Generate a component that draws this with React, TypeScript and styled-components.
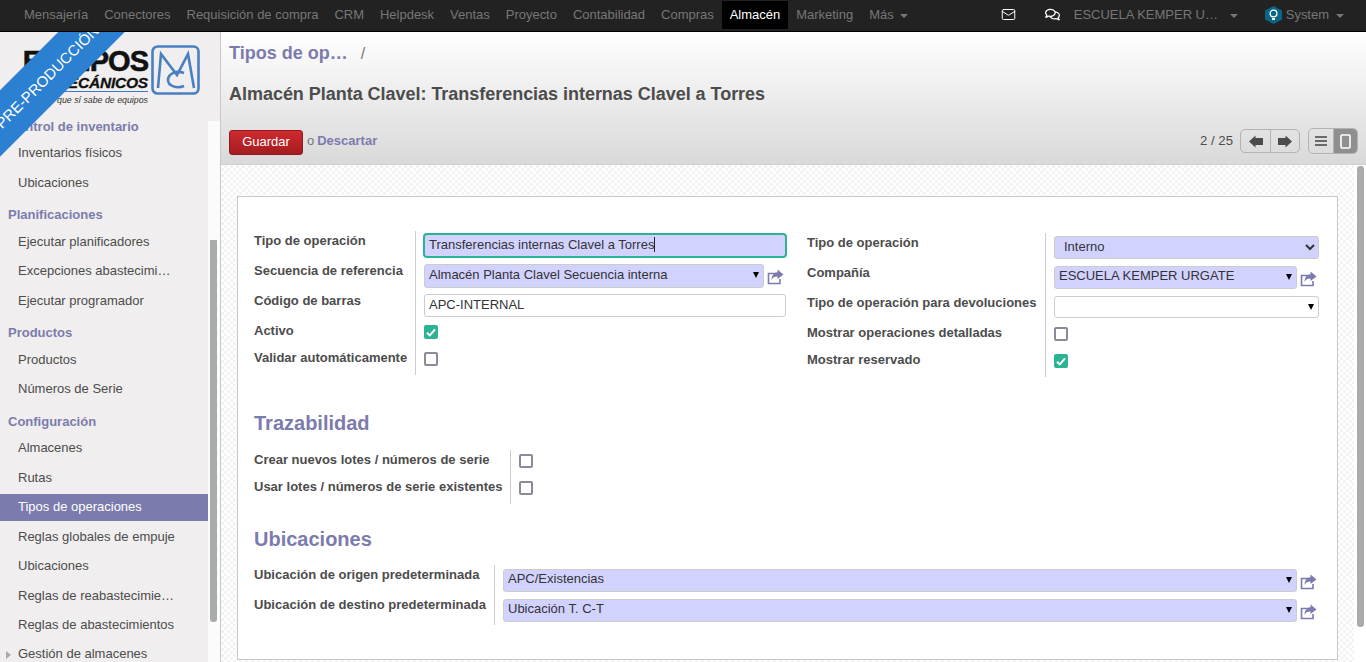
import React from 'react';
import styled, { createGlobalStyle } from 'styled-components';
import { FaRegComments } from 'react-icons/fa';
import { Mail } from 'lucide-react';

const PURPLE = '#7c7bad';
const REQUIRED = '#d2d2ff';
const TEAL = '#2bb394';

const GlobalStyle = createGlobalStyle`
  html, body, #root {
    margin: 0;
    height: 100%;
  }
  body {
    font-family: "Liberation Sans", Arial, sans-serif;
    font-size: 13px;
    color: #4c4c4c;
    overflow: hidden;
  }
  * {
    box-sizing: border-box;
  }
`;

const Shell = styled.div`
  height: 662px;
  display: flex;
  flex-direction: column;
  overflow: hidden;
`;

/* top bar */
const NavBar = styled.nav`
  flex: none;
  height: 32px;
  display: flex;
  align-items: stretch;
  background: #222;
  border-bottom: 1px solid #000;
  padding-left: 16px;
  letter-spacing: -0.015px;
  position: relative;
  z-index: 2;
`;

const NavItem = styled.a<{ $active?: boolean }>`
  display: flex;
  align-items: center;
  gap: 6px;
  padding: 0 8px 2px;
  height: 28px;
  margin-top: 1px;
  color: ${(p) => (p.$active ? '#fff' : '#777')};
  background: ${(p) => (p.$active ? '#000' : 'none')};
`;

const Caret = styled.span`
  width: 0;
  height: 0;
  margin-top: 3px;
  border-left: 4px solid transparent;
  border-right: 4px solid transparent;
  border-top: 4px solid #777;
`;

const NavRight = styled.div`
  margin-left: auto;
  display: flex;
  align-items: center;
  color: #777;
  height: 28px;
  padding-bottom: 2px;
  margin-top: 1px;
`;

const NavIcon = styled.span<{ $w: number }>`
  width: ${(p) => p.$w}px;
  display: flex;
  color: #fff;
  font-size: 15px;
`;

const Company = styled.span`
  width: 146px;
  white-space: nowrap;
  overflow: hidden;
  text-overflow: ellipsis;
  margin-right: 10px;
`;

const UserMenu = styled.span`
  display: flex;
  align-items: center;
  margin-left: 27px;
  margin-right: 22px;
`;

const Hex = styled.svg`
  width: 17px;
  height: 18px;
  margin: 2px 4px 0 0;
`;

const UserName = styled.span`
  margin-right: 7px;
`;

/* layout */
const Body = styled.div`
  flex: 1;
  min-height: 0;
  display: flex;
`;

const Sidebar = styled.aside`
  position: relative;
  flex: none;
  width: 221px;
  display: flex;
  flex-direction: column;
  background: #f0eeee;
  border-right: 1px solid #c8c8c8;
  overflow: hidden;
`;

const Ribbon = styled.div`
  position: absolute;
  left: -78px;
  top: 21px;
  width: 250px;
  height: 47px;
  line-height: 47px;
  transform: rotate(-45deg);
  background: #2c80d2;
  color: #fff;
  font-size: 15px;
  text-align: center;
`;

const LogoBlock = styled.div`
  flex: none;
  height: 89px;
  display: flex;
  padding: 13px 0 0 21px;
`;

const LogoText = styled.div`
  width: 127px;
  text-align: right;
  color: #111;
`;

const LogoMain = styled.div`
  font-size: 29px;
  line-height: 28px;
  font-weight: 700;
  letter-spacing: -1px;
  -webkit-text-stroke: 0.6px #111;
  margin-top: 2px;
  white-space: nowrap;
`;

const LogoSub = styled.div`
  font-size: 15.5px;
  line-height: 16px;
  font-weight: 700;
  font-style: italic;
  letter-spacing: -0.2px;
  border-bottom: 1px solid #3f78be;
  -webkit-text-stroke: 0.3px #111;
`;

const LogoSlogan = styled.div`
  font-size: 8.8px;
  line-height: 13px;
  font-style: italic;
  color: #333;
  margin-top: 2px;
  white-space: nowrap;
`;

const LogoMark = styled.svg`
  width: 49px;
  height: 50px;
  margin-left: 3px;
  flex: none;
`;

const MenuScroll = styled.div`
  flex: 1;
  min-height: 0;
  display: flex;
`;

const MenuList = styled.div`
  width: 208px;
  flex: none;
`;

const ScrollTrack = styled.div`
  flex: 1;
  background: #fbfbfb;
`;

const SideThumb = styled.div`
  width: 7px;
  height: 382px;
  margin: 119px 0 0 2px;
  background: #a8acab;
  border-radius: 0 0 3px 3px;
`;

const MenuHeading = styled.div<{ $first?: boolean }>`
  height: ${(p) => (p.$first ? '10px' : '24px')};
  line-height: ${(p) => (p.$first ? '12px' : '26px')};
  margin: ${(p) => (p.$first ? '0 0 9px' : '5.5px 0 2.5px')};
  padding-left: 8px;
  font-weight: 700;
  color: ${PURPLE};
`;

const MenuItem = styled.div<{ $active?: boolean }>`
  height: 27px;
  line-height: 25px;
  margin-bottom: 2.5px;
  padding: 0 33px 0 18px;
  white-space: nowrap;
  overflow: hidden;
  text-overflow: ellipsis;
  color: ${(p) => (p.$active ? '#fff' : '#4c4c4c')};
  background: ${(p) => (p.$active ? PURPLE : 'none')};
`;

const MenuFolder = styled.div`
  display: flex;
  align-items: center;
  height: 23px;
  padding-left: 6px;
  gap: 7px;
  white-space: nowrap;
  color: #4c4c4c;
`;

const FolderArrow = styled.span`
  width: 0;
  height: 0;
  margin-top: 3px;
  border-top: 4px solid transparent;
  border-bottom: 4px solid transparent;
  border-left: 5px solid #aaa;
`;

/* control panel */
const Main = styled.main`
  flex: 1;
  min-width: 0;
  display: flex;
  flex-direction: column;
`;

const ControlPanel = styled.header`
  flex: none;
  height: 133px;
  padding: 9px 8px 0;
  background: linear-gradient(#fff, #d9d9d9);
  border-bottom: 1px solid #cfcfcf;
`;

const Breadcrumb = styled.div`
  height: 24px;
  line-height: 25px;
  display: flex;
  font-size: 18px;
  font-weight: 700;
  color: ${PURPLE};
`;

const CrumbSep = styled.span`
  margin-left: 13px;
  font-weight: 400;
  font-size: 16px;
  color: #777;
`;

const Title = styled.h1`
  margin: 16px 0 0;
  height: 24px;
  line-height: 26px;
  font-size: 18px;
  font-weight: 700;
  letter-spacing: -0.03px;
  color: #4c4c4c;
`;

const Toolbar = styled.div`
  display: flex;
  align-items: flex-start;
  margin-top: 24px;
`;

const SaveButton = styled.button`
  width: 74px;
  height: 25px;
  margin-top: 1px;
  padding: 0 0 2px;
  font: 13px "Liberation Sans", Arial, sans-serif;
  color: #fff;
  background: linear-gradient(#cf2a30, #a31c20);
  border: 1px solid #8f1a1d;
  border-radius: 3px;
`;

const Or = styled.span`
  margin: 3px 3px 0 4px;
  line-height: 18px;
  color: #777;
`;

const Discard = styled.a`
  margin-top: 3px;
  line-height: 18px;
  font-weight: 700;
  color: ${PURPLE};
`;

const Pager = styled.div`
  margin-left: auto;
  display: flex;
  align-items: center;
  height: 24px;
`;

const PagerText = styled.span`
  padding-bottom: 2px;
  font-size: 13.2px;
`;

const ButtonGroup = styled.div<{ $ml: number }>`
  display: flex;
  height: ${(p) => (p.$ml === 8 ? '26px' : '24px')};
  margin-left: ${(p) => p.$ml}px;
  border: 1px solid #b3b3b3;
  border-radius: 5px;
  overflow: hidden;
`;

const GroupButton = styled.span<{ $active?: boolean }>`
  width: 29px;
  display: flex;
  align-items: center;
  justify-content: center;
  background: ${(p) => (p.$active ? '#8f8f8f' : 'transparent')};
  & + & {
    border-left: 1px solid #b3b3b3;
  }
`;

const ViewButton = styled(GroupButton)`
  width: 24px;
`;

/* form */
const Content = styled.div`
  flex: 1;
  min-height: 0;
  display: flex;
  overflow: hidden;
`;

const Checker = styled.div`
  flex: 1;
  min-width: 0;
  padding: 31px 16px 0;
  background-color: #fff;
  background-image: conic-gradient(#f3f3f3 25%, transparent 0 50%, #f3f3f3 0 75%, transparent 0);
  background-size: 6px 6px;
`;

const PageTrack = styled.div`
  flex: none;
  width: 12px;
  background: #fff;
`;

const PageThumb = styled.div`
  width: 7px;
  height: 461px;
  margin: 1px 0 0 3px;
  background: #a8acab;
  border-radius: 3px;
`;

const Sheet = styled.div`
  background: #fff;
  border: 1px solid #c9c9c9;
  padding: 34px 18px 34px 16px;
`;

const TopGroups = styled.div`
  display: grid;
  grid-template-columns: 532px 512px;
  column-gap: 21px;
  align-items: start;
`;

const FieldGrid = styled.div<{ $label: number; $shift?: boolean }>`
  display: grid;
  grid-template-columns: ${(p) => p.$label}px 1fr;
  margin-top: ${(p) => (p.$shift ? '2px' : '0')};
`;

const Label = styled.label<{ $h: number }>`
  height: ${(p) => p.$h}px;
  padding-top: 3px;
  line-height: 14px;
  font-weight: 700;
  color: #4c4c4c;
  white-space: nowrap;
`;

const Cell = styled.div<{ $h: number; $mt: number }>`
  height: ${(p) => p.$h}px;
  padding: ${(p) => p.$mt}px 0 0 8px;
  border-left: 1px solid #ccc;
  display: flex;
  align-items: flex-start;
`;

const TextBox = styled.div<{ $h: number; $focus?: boolean; $required?: boolean }>`
  flex: 1;
  height: ${(p) => p.$h}px;
  min-width: 0;
  display: flex;
  align-items: center;
  padding: 0 0 3px 4px;
  margin: 0 ${(p) => (p.$focus ? '-1px' : '0')};
  font-size: 13px;
  color: #333;
  background: ${(p) => (p.$required ? REQUIRED : '#fff')};
  border: ${(p) => (p.$focus ? `2px solid ${TEAL}` : '1px solid #ccc')};
  border-radius: ${(p) => (p.$focus ? '4px' : '3px')};
`;

const TextCaret = styled.span`
  width: 1px;
  height: 15px;
  background: #222;
`;

const DropBox = styled(TextBox)`
  position: relative;
  padding-right: 18px;
  padding-bottom: 4px;
  white-space: nowrap;
  &::after {
    content: '';
    position: absolute;
    right: 4px;
    top: 7px;
    border-left: 3px solid transparent;
    border-right: 3px solid transparent;
    border-top: 6px solid #000;
  }
`;

const NativeSelect = styled.select`
  width: 100%;
  height: 23px;
  padding: 0 0 2px 5px;
  font: 13px "Liberation Sans", Arial, sans-serif;
  color: #333;
  background-color: ${REQUIRED};
  border: 1px solid #ccc;
  border-radius: 3px;
`;

const ShareIcon = styled.svg`
  flex: none;
  width: 17px;
  height: 16px;
  margin: 5px 2px 0 3px;
  fill: none;
`;

const Box = styled.span<{ $on?: boolean }>`
  width: 14px;
  height: 14px;
  display: flex;
  align-items: center;
  justify-content: center;
  background: ${(p) => (p.$on ? TEAL : '#fff')};
  border: ${(p) => (p.$on ? 'none' : '2px solid #8b8a99')};
  border-radius: 2px;
`;

const Section = styled.h2<{ $top: number; $bottom: number }>`
  margin: ${(p) => p.$top}px 0 ${(p) => p.$bottom}px;
  height: 24px;
  line-height: 24px;
  font-size: 20px;
  font-weight: 700;
  color: ${PURPLE};
`;

const Share = () => (
  <ShareIcon viewBox="0 0 17 16">
    <path d="M9 4.5H1.5V14.5H13V10" stroke={PURPLE} strokeWidth="1.6" />
    <path d="M10.5 0.5L16.5 5.5L10.5 10V7.5C7.5 7.5 5.5 8.5 4.5 11C4.5 7 6.5 3.5 10.5 3.2Z" fill={PURPLE} />
  </ShareIcon>
);

const CheckBox = ({ on }: { on?: boolean }) => (
  <Box $on={on}>
    {on && (
      <svg width="10" height="9" viewBox="0 0 10 9">
        <path d="M1 4.8L3.8 7.4L9 1.4" fill="none" stroke="#fff" strokeWidth="2" />
      </svg>
    )}
  </Box>
);

const PagerArrow = ({ flip }: { flip?: boolean }) => (
  <svg width="14" height="13" viewBox="0 0 14 13" style={flip ? { transform: 'scaleX(-1)' } : undefined}>
    <path d="M0 6.5L6.5 0.5V3H14V10H6.5V12.5Z" fill="#4c4c4c" />
  </svg>
);

const mainMenu = [
  'Mensajería',
  'Conectores',
  'Requisición de compra',
  'CRM',
  'Helpdesk',
  'Ventas',
  'Proyecto',
  'Contabilidad',
  'Compras',
];

const sideMenu: { title: string; items: string[] }[] = [
  { title: 'Control de inventario', items: ['Inventarios físicos', 'Ubicaciones'] },
  { title: 'Planificaciones', items: ['Ejecutar planificadores', 'Excepciones abastecimiento', 'Ejecutar programador'] },
  { title: 'Productos', items: ['Productos', 'Números de Serie'] },
  {
    title: 'Configuración',
    items: [
      'Almacenes',
      'Rutas',
      'Tipos de operaciones',
      'Reglas globales de empuje',
      'Ubicaciones',
      'Reglas de reabastecimiento',
      'Reglas de abastecimientos',
    ],
  },
];

const App: React.FC = () => {
  return (
    <Shell>
      <GlobalStyle />
      <NavBar>
        {mainMenu.map((name) => (
          <NavItem key={name}>{name}</NavItem>
        ))}
        <NavItem $active>Almacén</NavItem>
        <NavItem>Marketing</NavItem>
        <NavItem>
          Más <Caret />
        </NavItem>
        <NavRight>
          <NavIcon $w={44}>
            <Mail size={15} strokeWidth={1.6} />
          </NavIcon>
          <NavIcon $w={29}>
            <FaRegComments />
          </NavIcon>
          <Company>ESCUELA KEMPER URGATE</Company>
          <Caret />
          <UserMenu>
            <Hex viewBox="0 0 17 18">
              <path d="M8.5 0L17 4.5V13.5L8.5 18L0 13.5V4.5Z" fill="#0b6584" />
              <circle cx="8.5" cy="7.5" r="3.4" fill="none" stroke="#fff" strokeWidth="1.3" />
              <path d="M7 12H10V14H7Z" fill="#fff" />
            </Hex>
            <UserName>System</UserName>
            <Caret />
          </UserMenu>
        </NavRight>
      </NavBar>
      <Body>
        <Sidebar>
          <LogoBlock>
            <LogoText>
              <LogoMain>EQUIPOS</LogoMain>
              <LogoSub>MECÁNICOS</LogoSub>
              <LogoSlogan>que sí sabe de equipos</LogoSlogan>
            </LogoText>
            <LogoMark viewBox="0 0 49 50">
              <rect x="1.5" y="1.5" width="46" height="47" rx="5" fill="none" stroke="#4a7fc1" strokeWidth="2.6" />
              <path d="M7 43L10 9L26 30L37 9L43 43" fill="none" stroke="#4a7fc1" strokeWidth="2.6" />
              <path d="M33 28C25 25 17 29 17 35C17 41 26 44 33 41" fill="none" stroke="#4a7fc1" strokeWidth="2.6" />
            </LogoMark>
          </LogoBlock>
          <MenuScroll>
            <MenuList>
              {sideMenu.map((group, i) => (
                <div key={group.title}>
                  <MenuHeading $first={i === 0}>{group.title}</MenuHeading>
                  {group.items.map((item) => (
                    <MenuItem key={item} $active={item === 'Tipos de operaciones'}>
                      {item}
                    </MenuItem>
                  ))}
                </div>
              ))}
              <MenuFolder>
                <FolderArrow />
                Gestión de almacenes
              </MenuFolder>
            </MenuList>
            <ScrollTrack>
              <SideThumb />
            </ScrollTrack>
          </MenuScroll>
          <Ribbon>PRE-PRODUCCIÓN</Ribbon>
        </Sidebar>
        <Main>
          <ControlPanel>
            <Breadcrumb>
              Tipos de op…<CrumbSep>/</CrumbSep>
            </Breadcrumb>
            <Title>Almacén Planta Clavel: Transferencias internas Clavel a Torres</Title>
            <Toolbar>
              <SaveButton>Guardar</SaveButton>
              <Or>o</Or>
              <Discard>Descartar</Discard>
              <Pager>
                <PagerText>2 / 25</PagerText>
                <ButtonGroup $ml={7}>
                  <GroupButton>
                    <PagerArrow />
                  </GroupButton>
                  <GroupButton>
                    <PagerArrow flip />
                  </GroupButton>
                </ButtonGroup>
                <ButtonGroup $ml={8}>
                  <ViewButton>
                    <svg width="12" height="10" viewBox="0 0 12 10">
                      <path d="M0 1H12M0 5H12M0 9H12" stroke="#444" strokeWidth="1.6" />
                    </svg>
                  </ViewButton>
                  <ViewButton $active>
                    <svg width="11" height="15" viewBox="0 0 11 15">
                      <rect x="1" y="1" width="9" height="13" rx="1" fill="none" stroke="#fff" strokeWidth="1.6" />
                    </svg>
                  </ViewButton>
                </ButtonGroup>
              </Pager>
            </Toolbar>
          </ControlPanel>
          <Content>
            <Checker>
              <Sheet>
                <TopGroups>
                  <FieldGrid $label={161}>
                    <Label $h={30}>Tipo de operación</Label>
                    <Cell $h={30} $mt={2}>
                      <TextBox $h={25} $focus $required>
                        Transferencias internas Clavel a Torres
                        <TextCaret />
                      </TextBox>
                    </Cell>
                    <Label $h={30}>Secuencia de referencia</Label>
                    <Cell $h={30} $mt={3}>
                      <DropBox $h={24} $required>
                        Almacén Planta Clavel Secuencia interna
                      </DropBox>
                      <Share />
                    </Cell>
                    <Label $h={30}>Código de barras</Label>
                    <Cell $h={30} $mt={3}>
                      <TextBox $h={23}>APC-INTERNAL</TextBox>
                    </Cell>
                    <Label $h={27}>Activo</Label>
                    <Cell $h={27} $mt={4}>
                      <CheckBox on />
                    </Cell>
                    <Label $h={27}>Validar automáticamente</Label>
                    <Cell $h={27} $mt={4}>
                      <CheckBox />
                    </Cell>
                  </FieldGrid>
                  <FieldGrid $label={238} $shift>
                    <Label $h={30}>Tipo de operación</Label>
                    <Cell $h={30} $mt={3}>
                      <NativeSelect defaultValue="internal">
                        <option value="internal">Interno</option>
                      </NativeSelect>
                    </Cell>
                    <Label $h={30}>Compañía</Label>
                    <Cell $h={30} $mt={3}>
                      <DropBox $h={23} $required>
                        ESCUELA KEMPER URGATE
                      </DropBox>
                      <Share />
                    </Cell>
                    <Label $h={30}>Tipo de operación para devoluciones</Label>
                    <Cell $h={30} $mt={3}>
                      <DropBox $h={22} />
                    </Cell>
                    <Label $h={27}>Mostrar operaciones detalladas</Label>
                    <Cell $h={27} $mt={4}>
                      <CheckBox />
                    </Cell>
                    <Label $h={27}>Mostrar reservado</Label>
                    <Cell $h={27} $mt={4}>
                      <CheckBox on />
                    </Cell>
                  </FieldGrid>
                </TopGroups>
                <Section $top={34} $bottom={15}>
                  Trazabilidad
                </Section>
                <FieldGrid $label={256}>
                  <Label $h={27}>Crear nuevos lotes / números de serie</Label>
                  <Cell $h={27} $mt={4}>
                    <CheckBox />
                  </Cell>
                  <Label $h={27}>Usar lotes / números de serie existentes</Label>
                  <Cell $h={27} $mt={4}>
                    <CheckBox />
                  </Cell>
                </FieldGrid>
                <Section $top={23} $bottom={14}>
                  Ubicaciones
                </Section>
                <FieldGrid $label={240}>
                  <Label $h={30}>Ubicación de origen predeterminada</Label>
                  <Cell $h={30} $mt={4}>
                    <DropBox $h={23} $required>
                      APC/Existencias
                    </DropBox>
                    <Share />
                  </Cell>
                  <Label $h={30}>Ubicación de destino predeterminada</Label>
                  <Cell $h={30} $mt={4}>
                    <DropBox $h={23} $required>
                      Ubicación T. C-T
                    </DropBox>
                    <Share />
                  </Cell>
                </FieldGrid>
              </Sheet>
            </Checker>
            <PageTrack>
              <PageThumb />
            </PageTrack>
          </Content>
        </Main>
      </Body>
    </Shell>
  );
};

export default App;
